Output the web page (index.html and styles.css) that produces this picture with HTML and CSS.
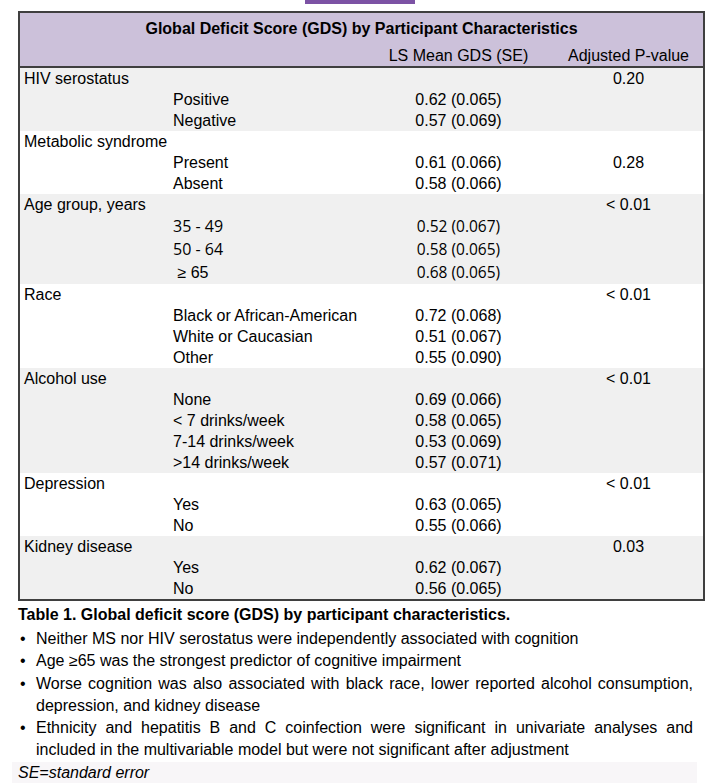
FILE: index.html
```html
<!DOCTYPE html>
<html>
<head>
<meta charset="utf-8">
<link rel="stylesheet" href="styles.css">
</head>
<body>
<div class="page">
  <div class="topbar"></div>
  <table class="gds">
    <colgroup>
      <col class="c1"><col class="c2"><col class="c3"><col class="c4">
    </colgroup>
    <thead>
      <tr class="title-row"><th colspan="4">Global Deficit Score (GDS) by Participant Characteristics</th></tr>
      <tr class="sub-row"><th></th><th></th><th class="ctr">LS Mean GDS (SE)</th><th class="ctr">Adjusted P-value</th></tr>
    </thead>
    <tbody class="alt">
      <tr><td class="lbl" colspan="2">HIV serostatus</td><td></td><td class="ctr">0.20</td></tr>
      <tr><td></td><td>Positive</td><td class="ctr">0.62 (0.065)</td><td></td></tr>
      <tr><td></td><td>Negative</td><td class="ctr">0.57 (0.069)</td><td></td></tr>
    </tbody>
    <tbody>
      <tr><td class="lbl" colspan="2">Metabolic syndrome</td><td></td><td></td></tr>
      <tr><td></td><td>Present</td><td class="ctr">0.61 (0.066)</td><td class="ctr">0.28</td></tr>
      <tr><td></td><td>Absent</td><td class="ctr">0.58 (0.066)</td><td></td></tr>
    </tbody>
    <tbody class="alt">
      <tr><td class="lbl" colspan="2">Age group, years</td><td></td><td class="ctr">&lt; 0.01</td></tr>
      <tr class="age"><td></td><td class="sans lab">35 - 49</td><td class="ctr sans">0.52 (0.067)</td><td></td></tr>
      <tr class="age"><td></td><td class="sans lab">50 - 64</td><td class="ctr sans">0.58 (0.065)</td><td></td></tr>
      <tr class="age"><td></td><td>&nbsp;≥ 65</td><td class="ctr sans">0.68 (0.065)</td><td></td></tr>
    </tbody>
    <tbody>
      <tr><td class="lbl" colspan="2">Race</td><td></td><td class="ctr">&lt; 0.01</td></tr>
      <tr><td></td><td>Black or African-American</td><td class="ctr">0.72 (0.068)</td><td></td></tr>
      <tr><td></td><td>White or Caucasian</td><td class="ctr">0.51 (0.067)</td><td></td></tr>
      <tr><td></td><td>Other</td><td class="ctr">0.55 (0.090)</td><td></td></tr>
    </tbody>
    <tbody class="alt">
      <tr><td class="lbl" colspan="2">Alcohol use</td><td></td><td class="ctr">&lt; 0.01</td></tr>
      <tr><td></td><td>None</td><td class="ctr">0.69 (0.066)</td><td></td></tr>
      <tr><td></td><td>&lt; 7 drinks/week</td><td class="ctr">0.58 (0.065)</td><td></td></tr>
      <tr><td></td><td>7-14 drinks/week</td><td class="ctr">0.53 (0.069)</td><td></td></tr>
      <tr><td></td><td>&gt;14 drinks/week</td><td class="ctr">0.57 (0.071)</td><td></td></tr>
    </tbody>
    <tbody>
      <tr><td class="lbl" colspan="2">Depression</td><td></td><td class="ctr">&lt; 0.01</td></tr>
      <tr><td></td><td>Yes</td><td class="ctr">0.63 (0.065)</td><td></td></tr>
      <tr><td></td><td>No</td><td class="ctr">0.55 (0.066)</td><td></td></tr>
    </tbody>
    <tbody class="alt">
      <tr><td class="lbl" colspan="2">Kidney disease</td><td></td><td class="ctr">0.03</td></tr>
      <tr><td></td><td>Yes</td><td class="ctr">0.62 (0.067)</td><td></td></tr>
      <tr><td></td><td>No</td><td class="ctr">0.56 (0.065)</td><td></td></tr>
    </tbody>
  </table>
  <p class="caption">Table 1. Global deficit score (GDS) by participant characteristics.</p>
  <ul class="notes">
    <li><span class="dot">•</span><span class="txt">Neither MS nor HIV serostatus were independently associated with cognition</span></li>
    <li><span class="dot">•</span><span class="txt">Age ≥65 was the strongest predictor of cognitive impairment</span></li>
    <li><span class="dot">•</span><span class="txt">Worse cognition was also associated with black race, lower reported alcohol consumption, depression, and kidney disease</span></li>
    <li><span class="dot">•</span><span class="txt">Ethnicity and hepatitis B and C coinfection were significant in univariate analyses and included in the multivariable model but were not significant after adjustment</span></li>
  </ul>
  <div class="se">SE=standard error</div>
</div>
</body>
</html>
```
FILE: styles.css
```css
html, body {
  margin: 0;
  padding: 0;
  background: #ffffff;
}
body {
  font-family: "Liberation Sans", Arial, sans-serif;
  font-size: 16px;
  color: #000;
}
.page {
  width: 721px;
  height: 783px;
  overflow: hidden;
}
.topbar {
  margin-left: 305px;
  width: 110px;
  height: 4px;
  background: #7c52a4;
}
.gds {
  margin: 7px 0 0 18px;
  width: 687px;
  border-collapse: collapse;
  table-layout: fixed;
  border: 2px solid #3f3f3f;
}
.c1 { width: 150px; }
.c2 { width: 194px; }
.c3 { width: 191px; }
.c4 { width: 150px; }
.gds th, .gds td {
  padding: 0 0 0 4px;
  font-weight: normal;
  text-align: left;
  white-space: nowrap;
  vertical-align: middle;
}
.gds thead {
  background: #ccc1da;
  border-bottom: 2px solid #3f3f3f;
}
.title-row th {
  height: 32px;
  font-weight: bold;
  font-size: 16px;
  text-align: center;
  padding: 0;
}
.sub-row th {
  height: 21px;
  line-height: 21px;
}
.gds th.ctr, .gds td.ctr {
  text-align: center;
  padding: 0;
}
.gds td {
  height: 21px;
  line-height: 21px;
}
.gds tr.age td {
  height: 23px;
  line-height: 23px;
}
.gds td.sans {
  font-family: "Open Sans", sans-serif;
  font-size: 15.5px;
}
.gds td.sans.lab {
  font-size: 16px;
}
.gds tbody.alt {
  background: #f0f0f0;
}
.caption {
  margin: 3px 0 0 18px;
  font-weight: bold;
  line-height: 22px;
}
.notes {
  list-style: none;
  margin: 2px 0 0 0;
  padding: 0;
}
.notes li {
  display: flex;
  line-height: 22.3px;
}
.dot {
  width: 36px;
  flex: none;
  text-indent: 20px;
}
.txt {
  width: 657px;
  text-align: justify;
}
.se {
  margin: 0 0 0 12px;
  width: 679px;
  padding-left: 6px;
  font-style: italic;
  line-height: 22px;
  background: #f8f6f8;
}
```
